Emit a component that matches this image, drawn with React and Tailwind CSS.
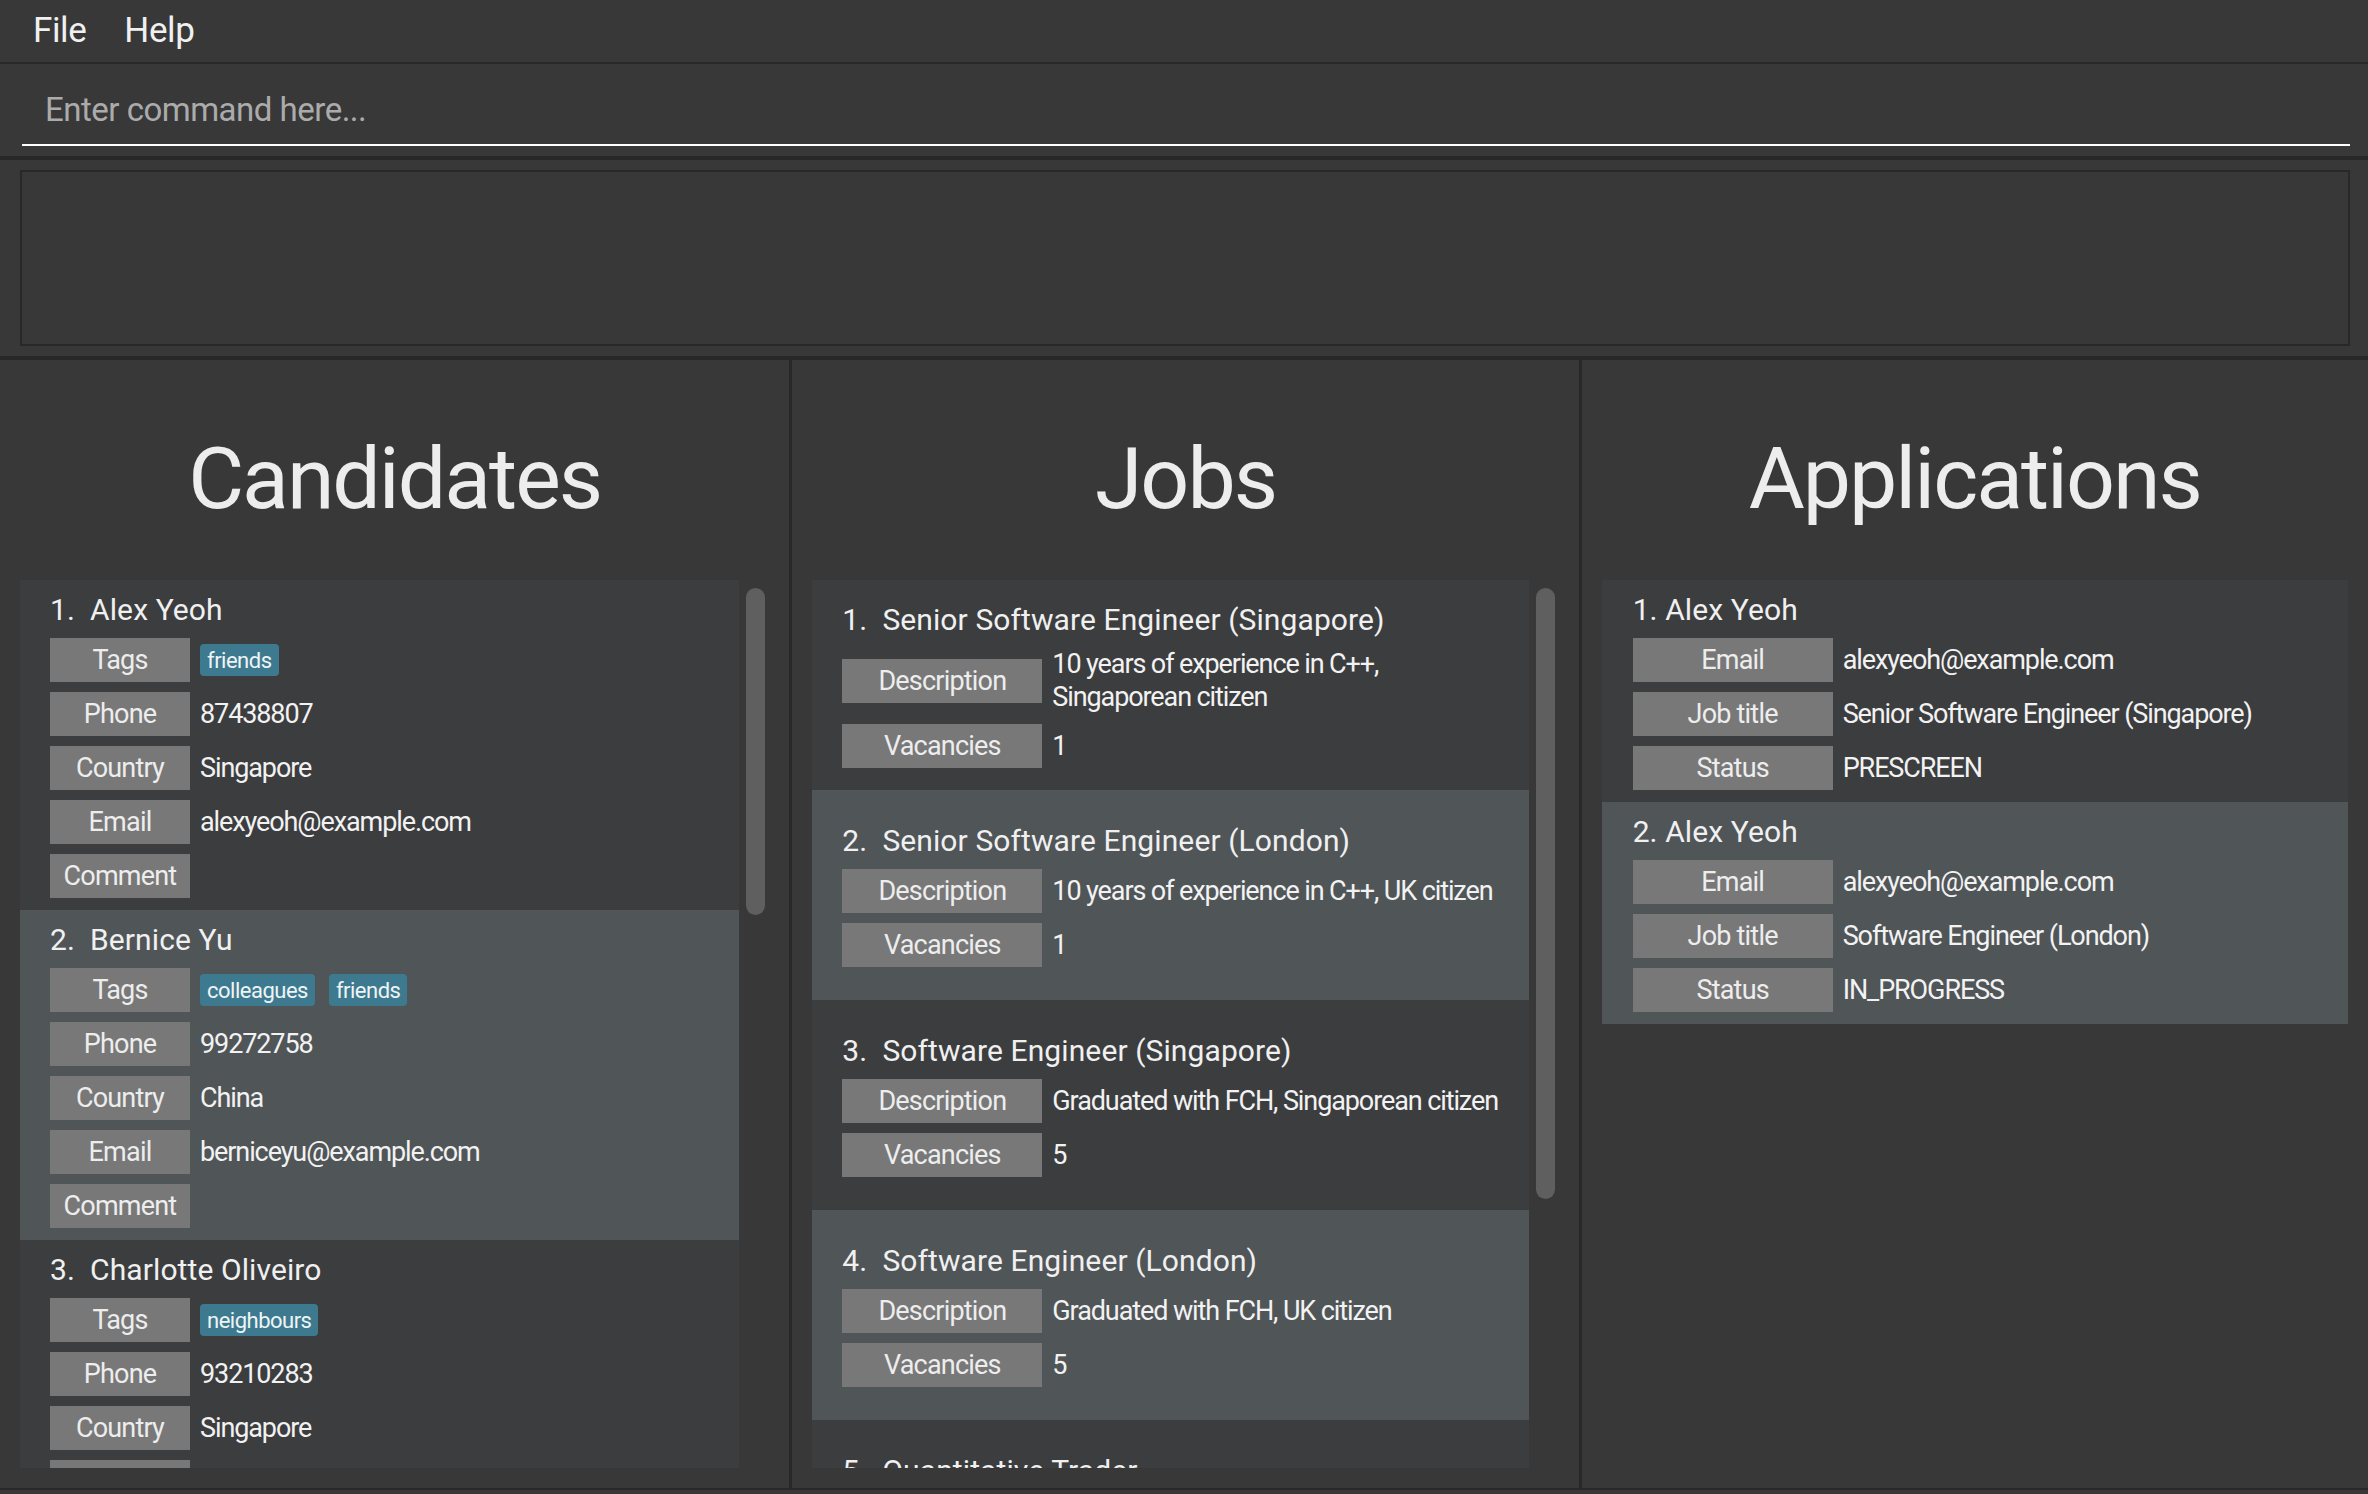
import React from 'react';

const candidates = [
  { name: 'Alex Yeoh', tags: ['friends'], phone: '87438807', country: 'Singapore', email: 'alexyeoh@example.com' },
  { name: 'Bernice Yu', tags: ['colleagues', 'friends'], phone: '99272758', country: 'China', email: 'berniceyu@example.com' },
  { name: 'Charlotte Oliveiro', tags: ['neighbours'], phone: '93210283', country: 'Singapore', email: 'charlotte@example.com' },
  { name: 'David Li', tags: ['family'], phone: '91031282', country: 'Singapore', email: 'lidavid@example.com' },
];

const jobs = [
  { title: 'Senior Software Engineer (Singapore)', desc: ['10 years of experience in C++,', 'Singaporean citizen'], vacancies: '1' },
  { title: 'Senior Software Engineer (London)', desc: ['10 years of experience in C++, UK citizen'], vacancies: '1' },
  { title: 'Software Engineer (Singapore)', desc: ['Graduated with FCH, Singaporean citizen'], vacancies: '5' },
  { title: 'Software Engineer (London)', desc: ['Graduated with FCH, UK citizen'], vacancies: '5' },
  { title: 'Quantitative Trader', desc: ['Strong maths background'], vacancies: '2' },
];

const applications = [
  { name: 'Alex Yeoh', email: 'alexyeoh@example.com', job: 'Senior Software Engineer (Singapore)', status: 'PRESCREEN' },
  { name: 'Alex Yeoh', email: 'alexyeoh@example.com', job: 'Software Engineer (London)', status: 'IN_PROGRESS' },
];

const cardBg = (index) => (index % 2 === 0 ? 'bg-[#3c3d3f]' : 'bg-[#505558]');

const Label = ({ children, wide }) => (
  <div
    className={`${wide ? 'w-[200px]' : 'w-[140px]'} h-[44px] shrink-0 bg-[#787878] flex items-center justify-center text-[27px] tracking-[-0.8px] text-[#ededed]`}
  >
    {children}
  </div>
);

const Row = ({ label, wide, children }) => (
  <div className="flex items-center gap-[10px] min-h-[44px]">
    <Label wide={wide}>{label}</Label>
    <div className="text-[27px] leading-[33px] tracking-[-1.1px] text-[#f2f2f2] whitespace-nowrap">{children}</div>
  </div>
);

const CardName = ({ children }) => (
  <div className="text-[30px] leading-[36px] tracking-[0.1px] text-[#f0f0f0] whitespace-pre">{children}</div>
);

const Scrollbar = ({ thumb }) => (
  <div className="w-[30px] shrink-0 pt-[8px] pl-[7px]">
    <div className={`${thumb} w-[19px] rounded-full bg-[#5f5f5f]`} />
  </div>
);

const Column = ({ title, bordered, children, thumb }) => (
  <div className={`flex flex-col min-h-0 ${bordered ? 'border-l-[3px] border-[#282828]' : ''}`}>
    <div className="h-[220px] shrink-0 flex items-center justify-center pt-[16px] text-[86px] text-[#ededed] tracking-[-2px]">
      {title}
    </div>
    <div className="flex-1 min-h-0 mx-[20px] mb-[20px] flex overflow-hidden">
      <div className="flex-1 min-w-0 flex flex-col overflow-hidden">{children}</div>
      {thumb && <Scrollbar thumb={thumb} />}
    </div>
  </div>
);

const CandidateCard = ({ c, index }) => (
  <div className={`${cardBg(index)} h-[330px] shrink-0 pl-[30px] flex flex-col justify-center gap-[10px]`}>
    <CardName>{`${index + 1}.  ${c.name}`}</CardName>
    <div className="flex flex-col gap-[10px]">
      <div className="flex items-center gap-[10px] h-[44px]">
        <Label>Tags</Label>
        <div className="flex items-center gap-[14px]">
          {c.tags.map((t) => (
            <span key={t} className="h-[32px] px-[7px] rounded-[4px] bg-[#3e7a8f] flex items-center text-[22px] tracking-[-0.5px] text-[#eef4f6]">
              {t}
            </span>
          ))}
        </div>
      </div>
      <Row label="Phone">{c.phone}</Row>
      <Row label="Country">{c.country}</Row>
      <Row label="Email">{c.email}</Row>
      <div className="flex items-center h-[44px]">
        <Label>Comment</Label>
      </div>
    </div>
  </div>
);

const JobCard = ({ j, index }) => (
  <div className={`${cardBg(index)} h-[210px] shrink-0 pl-[30px] flex flex-col justify-center gap-[10px]`}>
    <CardName>{`${index + 1}.  ${j.title}`}</CardName>
    <div className="flex flex-col gap-[10px]">
      <Row label="Description" wide>
        {j.desc.map((line) => (
          <div key={line}>{line}</div>
        ))}
      </Row>
      <Row label="Vacancies" wide>{j.vacancies}</Row>
    </div>
  </div>
);

const ApplicationCard = ({ a, index }) => (
  <div className={`${cardBg(index)} h-[222px] shrink-0 pl-[31px] flex flex-col justify-center gap-[10px]`}>
    <CardName>{`${index + 1}. ${a.name}`}</CardName>
    <div className="flex flex-col gap-[10px]">
      <Row label="Email" wide>{a.email}</Row>
      <Row label="Job title" wide>{a.job}</Row>
      <Row label="Status" wide>{a.status}</Row>
    </div>
  </div>
);

const App = () => {
  return (
    <div className="w-[2368px] h-[1494px] flex flex-col bg-[#383838] overflow-hidden pb-[4px] font-[family-name:Roboto,'Liberation_Sans',sans-serif]">
      {/* menu bar */}
      <div className="h-[64px] shrink-0 border-b-2 border-[#282828] flex items-center gap-[38px] pl-[33px] text-[35px] tracking-[-0.4px] text-[#f0f0f0]">
        <span>File</span>
        <span>Help</span>
      </div>

      {/* command box */}
      <div className="h-[96px] shrink-0 border-b-4 border-[#282828] pl-[22px] pr-[18px] pt-[10px]">
        <div className="h-[72px] border-b-2 border-white flex items-center pl-[23px] pt-[2px] text-[33px] tracking-[-0.5px] text-[#ababab]">
          Enter command here...
        </div>
      </div>

      {/* result display */}
      <div className="h-[200px] shrink-0 border-b-4 border-[#282828] pl-[20px] pr-[18px] pt-[10px]">
        <div className="h-[176px] border-2 border-[#282828]" />
      </div>

      {/* panels */}
      <div className="flex-1 min-h-0 grid grid-cols-3 border-b-2 border-[#282828]">
        <Column title="Candidates" thumb="h-[327px]">
          {candidates.map((c, i) => (
            <CandidateCard key={i} c={c} index={i} />
          ))}
        </Column>
        <Column title="Jobs" bordered thumb="h-[611px]">
          {jobs.map((j, i) => (
            <JobCard key={i} j={j} index={i} />
          ))}
        </Column>
        <Column title="Applications" bordered>
          {applications.map((a, i) => (
            <ApplicationCard key={i} a={a} index={i} />
          ))}
        </Column>
      </div>
    </div>
  );
};

export default App;
